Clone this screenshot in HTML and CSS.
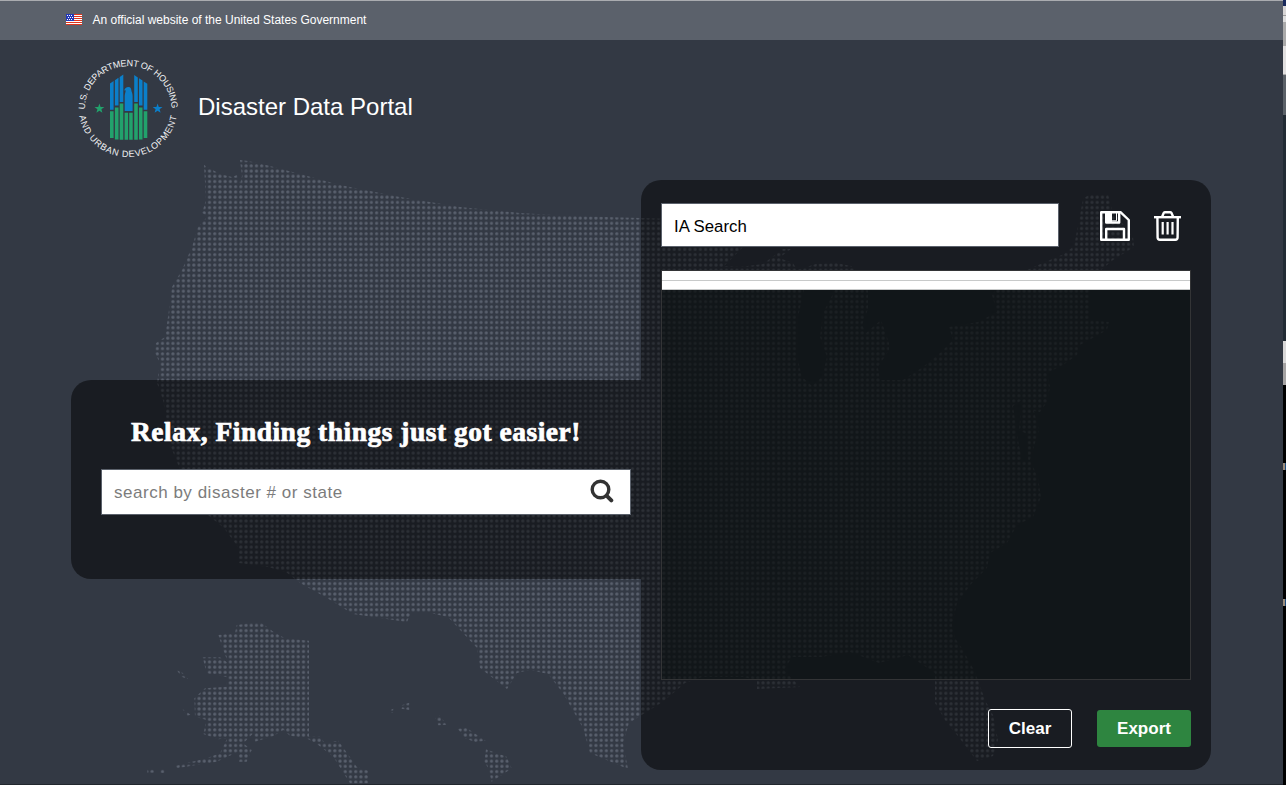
FILE: index.html
```html
<!DOCTYPE html>
<html lang="en">
<head>
<meta charset="utf-8">
<title>Disaster Data Portal</title>
<link rel="stylesheet" href="styles.css">
</head>
<body>
<div class="page">
  <svg class="map" width="1283" height="785" viewBox="0 0 1283 785" aria-hidden="true">
    <defs>
      <pattern id="dots" x="206.9" y="163.2" width="5.222" height="5.222" patternUnits="userSpaceOnUse">
        <circle cx="2.6" cy="2.6" r="1.6" fill="#59606d"/>
      </pattern>
      <clipPath id="land">
        <path clip-rule="evenodd" d="M204 165L209 168L220 174L232 177L237 175L240 184L242 176L240 160L248 161L270 166L300 174L340 185L400 197L460 207L520 213L570 216L640 218L700 220L735 235L744 246L724 266L740 267L763 264L783 249L791 249L779 258L793 263L797 270L816 264L836 263L851 266L862 276L868 291L868 309L862 325L866 333L881 320L889 343L889 350L878 367L880 380L903 380L923 367L940 353L953 340L949 327L978 322L997 312L992 295L1000 284L1029 269L1064 254L1074 246L1078 226L1083 199L1090 194L1108 194L1112 210L1133 237L1134 247L1113 260L1095 275L1089 290L1089 320L1109 322L1107 330L1080 345L1077 355L1063 365L1047 373L1050 387L1047 402L1040 412L1034 411L1039 430L1035 443L1030 460L1038 478L1041 497L1033 517L1017 525L1007 543L990 553L987 568L972 583L957 603L952 625L955 638L963 650L975 672L985 700L993 715L998 740L993 756L977 761L961 740L945 720L935 703L935 673L908 655L879 663L850 652L821 657L792 657L784 670L800 687L778 688L757 689L757 680L743 677L702 677L685 683L671 695L661 703L640 716L629 723L623 743L628 769L590 753L583 728L563 693L548 674L530 670L517 673L507 689L480 668L477 648L448 617L430 613L411 613L407 622L353 614L327 598L300 583L286 572L268 567L239 563L238 547L224 528L208 515L179 467L171 447L163 400L157 383L160 363L155 353L156 343L165 337L168 317L172 287L182 270L192 247L198 227L208 216L202 213L206 200ZM806 281L798 317L797 357L802 377L812 386L822 377L827 357L820 337L823 313L835 290L832 281ZM1013 406L1022 400L1019 430L1027 434L1028 462L1022 460L1018 440Z"/>
        <path transform="translate(140 570) scale(.3333)" d="M235 195L285 190L290 165L360 155L400 185L435 205L507 212L507 500L540 500L555 520L595 512L650 590L685 602L685 640L630 640L580 560L535 525L500 505L450 497L430 480L400 498L345 515L340 490L310 520L335 540L320 575L295 575L295 545L230 575L110 595L108 587L200 565L240 550L262 505L235 508L190 492L200 450L165 440L163 385L195 355L260 350L262 322L200 310L188 262L240 262L265 280L250 240ZM110 300L125 306L145 328L125 320ZM128 418L152 434L140 438ZM22 598H45V608H22ZM60 597H74V609H60ZM752 420L760 416V428H752ZM785 406L808 398V420L785 416ZM885 440L900 437L920 464L895 466ZM953 476L980 474L1037 512L1005 516L975 505ZM1038 538L1100 560L1115 595L1055 635L1045 595L1033 575Z"/>
      </clipPath>
    </defs>
    <rect width="1283" height="785" fill="url(#dots)" clip-path="url(#land)"/>
  </svg>

  <div class="gov-banner">
    <svg class="flag" width="16" height="11" viewBox="0 0 16 11" shape-rendering="crispEdges">
      <rect width="16" height="11" fill="#fff"/>
      <path d="M0 0h16v1H0zM0 2h16v1H0zM0 4h16v1H0zM0 6h16v1H0zM0 8h16v1H0zM0 10h16v1H0z" fill="#e0341c"/>
      <rect width="8" height="7" fill="#2338b8"/>
      <path d="M1 1h1v1H1zM3 1h1v1H3zM5 1h1v1H5zM2 3h1v1H2zM4 3h1v1H4zM6 3h1v1H6zM1 5h1v1H1zM3 5h1v1H3zM5 5h1v1H5z" fill="#fff"/>
    </svg>
    <span>An official website of the United States Government</span>
  </div>

  <header class="brand">
    <svg class="seal" width="104" height="104" viewBox="76 56 104 104">
      <defs>
        <path id="ringTop" d="M84.800 109.500A43.400 43.400 0 0 1 171.600 109.500"/>
        <path id="ringBottom" d="M78.500 107.500A49.500 49.500 0 0 0 177.500 107.500"/>
      </defs>
      <g class="seal-text">
        <text><textPath href="#ringTop" startOffset="0" textLength="135">U.S. DEPARTMENT OF HOUSING</textPath></text>
        <text><textPath href="#ringBottom" startOffset="8.500" textLength="138">AND URBAN DEVELOPMENT</textPath></text>
      </g>
      <g fill="#0b7fca">
        <path d="M110 83.600L113.600 81V109.800H110zM114.900 80.200L118.500 77.700V105.600H114.900zM119.700 77L123.300 74.500V101.900H119.700zM134.200 75L137.800 77.400V101.900H134.200zM139 78.200L142.500 80.500V105.600H139zM143.700 81.400L147.300 83.800V109.800H143.700z"/>
        <path d="M124.700 111V96C124.800 93.500 125.800 92 125.600 90.300L124.300 90.500C124.600 88 126.500 86.800 128.500 86.900C130.600 87.100 131.200 88.500 131.300 90C131.400 91.800 132.600 93 132.600 96V111Z"/>
      </g>
      <path fill="#22a26c" d="M110 111.300h3.600v26.700H110zM114.900 107.400h3.600v32.100h-3.600zM119.700 103.600h3.600v36.100h-3.600zM124.600 112.800h3.500v26.900h-3.500zM129.200 112.800h3.500v26.900h-3.500zM134.200 103.600h3.600v36.100h-3.600zM139 107.400h3.500v32.100H139zM143.700 111.300h3.600v26.700h-3.600z"/>
      <path fill="#22a26c" d="M99.400 103.400l1.200 3.500 3.700.1-2.900 2.200 1 3.600-3-2.100-3 2.100 1-3.600-2.900-2.200 3.700-.1z"/>
      <path fill="#0b7fca" d="M157.600 103.400l1.200 3.500 3.700.1-2.900 2.200 1 3.600-3-2.100-3 2.100 1-3.600-2.900-2.200 3.700-.1z"/>
    </svg>
    <h1>Disaster Data Portal</h1>
  </header>

  <main class="panels">
    <section class="finder">
      <h2>Relax, Finding things just got easier!</h2>
      <div class="search-box">
        <span class="placeholder">search by disaster # or state</span>
        <svg class="lens" width="24" height="24" viewBox="0 0 24 24" fill="none" stroke="#333" stroke-linecap="round">
          <circle cx="10.500" cy="10.500" r="8.300" stroke-width="3.400"/>
          <path d="M16.800 16.800L21.300 21.300" stroke-width="4"/>
        </svg>
      </div>
    </section>
    <section class="results">
      <div class="toolbar">
        <div class="name-field">IA Search</div>
        <svg class="save" width="30" height="30" viewBox="0 0 30 30" fill="none" stroke="#fff" stroke-width="2.400" stroke-linejoin="round">
          <path d="M1.200 1.200H20.500L28.800 9V28.800H1.200Z"/>
          <path d="M6.200 1.500V11.500H19.200V1.500"/>
          <path d="M6 1.500H12V11.500H6Z" fill="#fff" stroke="none"/>
          <path d="M16.500 1.500V9.800H12" stroke-width="1"/>
          <path d="M6.200 28.500V18H24V28.500"/>
        </svg>
        <svg class="trash" width="27" height="30" viewBox="0 0 27 30" fill="none" stroke="#fff" stroke-width="2.400" stroke-linejoin="round">
          <path d="M0 6.200H27"/>
          <path d="M8 6L9.800 1.800Q10.200 1.200 11 1.200H16.200Q17 1.200 17.400 1.800L19.200 6"/>
          <path d="M3.400 6.500L3.600 26.500Q3.700 28.700 5.800 28.700H21.400Q23.500 28.700 23.600 26.500L23.800 6.500"/>
          <path d="M8.700 11V23.500M13.600 11V23.500M18.500 11V23.500" stroke-width="2.200"/>
        </svg>
      </div>
      <div class="list"><div class="row"></div><div class="row last"></div></div>
      <div class="actions">
        <div class="btn clear">Clear</div>
        <div class="btn export">Export</div>
      </div>
    </section>
  </main>
</div>
<aside class="edge">
  <i class="e1"></i><i class="e2"></i><i class="e3"></i><i class="e4"></i><i class="e5"></i><i class="e6"></i>
  <i class="e7"></i><i class="mark"></i><i class="e8"></i><i class="mark"></i>
</aside>
</body>
</html>
```
FILE: styles.css
```css
* { box-sizing: border-box; }
body {
  margin: 0;
  width: 1286px;
  height: 785px;
  display: flex;
  overflow: hidden;
  background: #000;
  color: #fff;
  font-family: "Liberation Sans", Arial, sans-serif;
}
svg { display: block; flex: none; }
h1, h2 { margin: 0; }
.page {
  position: relative;
  width: 1283px;
  height: 785px;
  background: #333944;
  border-bottom: 1px solid #22272e;
}
.map { position: absolute; left: 0; top: 0; }
.gov-banner, .brand, .panels { position: relative; }
.gov-banner {
  height: 40px;
  border-top: 1px solid #aaacb0;
  background: #5b616b;
  display: flex;
  align-items: center;
  gap: 10.5px;
  padding: 0 0 2px 66px;
  font-size: 12px;
  white-space: nowrap;
}
.brand {
  height: 140px;
  display: flex;
  align-items: flex-start;
  padding: 16px 0 0 76px;
  gap: 18px;
}
.brand h1 {
  font-weight: 400;
  font-size: 24px;
  line-height: 28px;
  margin-top: 37px;
}
.seal-text { fill: #f2f3f4; font-size: 9px; }
.panels { display: flex; padding-left: 71px; }
.finder, .results { background: rgba(0, 0, 0, .5); }
.finder {
  width: 570px;
  height: 199px;
  margin-top: 200px;
  padding: 37px 10px 0 30px;
  border-radius: 20px 0 0 20px;
}
.finder h2 {
  font-family: "Liberation Serif", serif;
  font-size: 27.5px;
  line-height: 30px;
  letter-spacing: 0.5px;
  padding-left: 30px;
  white-space: nowrap;
  -webkit-text-stroke: 0.7px #fff;
}
.search-box {
  height: 46px;
  margin-top: 22px;
  padding: 0 16px 0 12px;
  display: flex;
  justify-content: space-between;
  align-items: center;
  background: #fff;
  border: 1px solid #5b616b;
}
.placeholder {
  color: #7c7c7c;
  font-size: 17px;
  letter-spacing: 0.52px;
  padding-top: 1px;
  white-space: nowrap;
}
.lens { margin-bottom: 2px; }
.results {
  width: 570px;
  height: 590px;
  padding: 23px 20px;
  border-radius: 20px;
}
.toolbar { display: flex; align-items: center; }
.name-field {
  width: 398px;
  height: 44px;
  padding: 3px 12px 0;
  display: flex;
  align-items: center;
  background: #fff;
  border: 1px solid #5b616b;
  color: #000;
  font-size: 16.8px;
}
.save { margin: 2px 0 0 41px; }
.trash { margin: 2px 0 0 24px; }
.list {
  height: 410px;
  margin-top: 23px;
  border: 1px solid #333436;
  background: rgba(10, 15, 15, .5);
}
.row { height: 10px; background: #fff; border-bottom: 1px solid #c8caca; }
.row.last { height: 9px; }
.actions {
  display: flex;
  justify-content: flex-end;
  align-items: center;
  gap: 25px;
  margin-top: 29px;
}
.btn {
  display: flex;
  align-items: center;
  justify-content: center;
  border-radius: 3px;
  font-weight: 700;
  font-size: 17px;
}
.clear { width: 84px; height: 39px; border: 1px solid #fff; }
.export { width: 94px; height: 37px; background: #2e8540; }
.edge { width: 3px; display: flex; flex-direction: column; }
.edge i { display: block; flex: none; }
.e1 { height: 6px; background: #19295c; }
.e2 { height: 69px; background: linear-gradient(#d8d6d6 9px, #999 9px 10px, #ddd 10px 16px, #aaa 16px 40px, #e2e0e0 40px 68px, #aaa 68px); }
.e3 { height: 40px; background: #5b6168; }
.e4 { height: 226px; background: #222b34; }
.e5 { height: 22px; background: #d9d8d8; }
.e6 { height: 22px; background: #a5a3a3; }
.e7 { height: 78px; }
.e8 { height: 129px; }
.mark { height: 7px; background: linear-gradient(90deg, #9b8c7c 2px, #1d4a7c 2px); }
```
